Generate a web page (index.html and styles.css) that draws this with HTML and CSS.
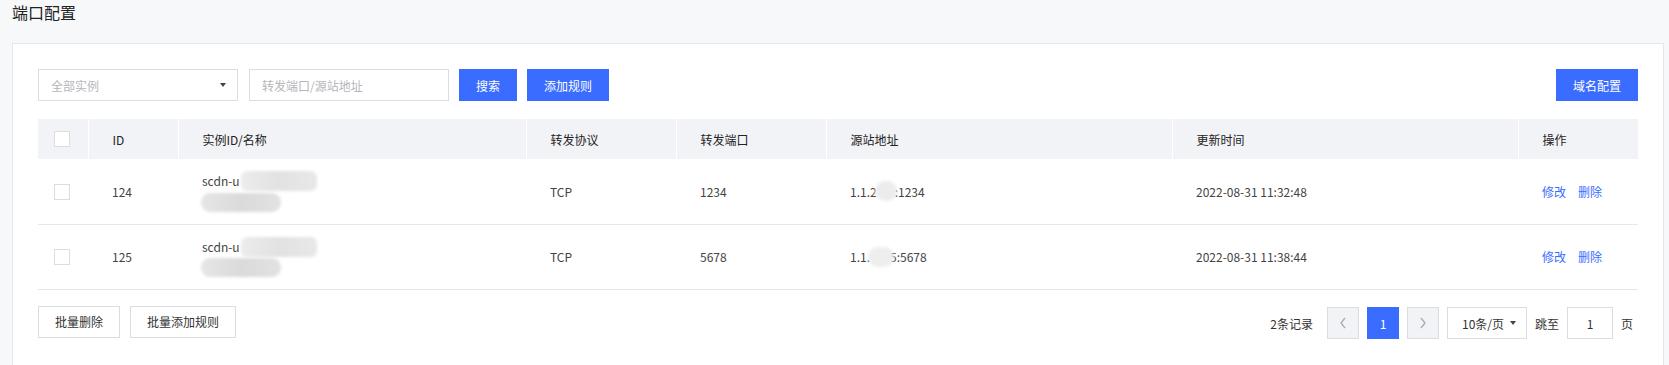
FILE: index.html
```html
<!DOCTYPE html>
<html lang="zh-CN">
<head>
<meta charset="utf-8">
<title>端口配置</title>
<link rel="stylesheet" href="styles.css">
</head>
<body>
<div class="page">
  <div class="title">端口配置</div>
  <div class="card">
    <div class="toolbar">
      <div class="tools-left">
        <div class="select"><span class="ph">全部实例</span><span class="caret"></span></div>
        <div class="input"><span class="ph">转发端口/源站地址</span></div>
        <button class="btn primary w58">搜索</button>
        <button class="btn primary w82">添加规则</button>
      </div>
      <button class="btn primary w82">域名配置</button>
    </div>
    <table class="grid">
      <colgroup>
        <col class="c-check"><col class="c-id"><col class="c-inst"><col class="c-proto"><col class="c-port"><col class="c-src"><col class="c-time"><col class="c-op">
      </colgroup>
      <thead>
        <tr>
          <th class="chk"><span class="checkbox"></span></th>
          <th>ID</th>
          <th>实例ID/名称</th>
          <th>转发协议</th>
          <th>转发端口</th>
          <th>源站地址</th>
          <th>更新时间</th>
          <th>操作</th>
        </tr>
      </thead>
      <tbody>
        <tr>
          <td class="chk"><span class="checkbox"></span></td>
          <td>124</td>
          <td><div class="inst"><div class="l1">scdn-u<span class="blur b1"></span></div><div class="l2"><span class="blur b2"></span></div></div></td>
          <td>TCP</td>
          <td>1234</td>
          <td><span class="ipline">1.1.2<span class="blur ip"></span>:1234</span></td>
          <td>2022-08-31 11:32:48</td>
          <td><a class="link">修改</a><a class="link">删除</a></td>
        </tr>
        <tr>
          <td class="chk"><span class="checkbox"></span></td>
          <td>125</td>
          <td><div class="inst"><div class="l1">scdn-u<span class="blur b1"></span></div><div class="l2"><span class="blur b2"></span></div></div></td>
          <td>TCP</td>
          <td>5678</td>
          <td><span class="ipline">1.1.<span class="blur ip ip2"></span>5:5678</span></td>
          <td>2022-08-31 11:38:44</td>
          <td><a class="link">修改</a><a class="link">删除</a></td>
        </tr>
      </tbody>
    </table>
    <div class="footer">
      <div class="tools-left">
        <button class="btn plain w82">批量删除</button>
        <button class="btn plain w106">批量添加规则</button>
      </div>
      <div class="pager">
        <span class="total">2条记录</span>
        <span class="pbtn disabled"><svg width="8" height="12" viewBox="0 0 8 12"><path d="M6 1 L2 6 L6 11" fill="none" stroke="#a8acb5" stroke-width="1.3"/></svg></span>
        <span class="pbtn active">1</span>
        <span class="pbtn disabled"><svg width="8" height="12" viewBox="0 0 8 12"><path d="M2 1 L6 6 L2 11" fill="none" stroke="#a8acb5" stroke-width="1.3"/></svg></span>
        <span class="psize">10条/页<span class="caret"></span></span>
        <span class="ptext">跳至</span>
        <span class="pjump">1</span>
        <span class="ptext">页</span>
      </div>
    </div>
  </div>
</div>
</body>
</html>
```

FILE: styles.css
```css
* { box-sizing: border-box; }
html, body { margin: 0; padding: 0; }
body {
  background: #f7f8fa;
  font-family: "Noto Sans CJK SC", "Noto Sans", sans-serif;
  font-size: 12px;
  color: #333;
  height: 365px;
  overflow: hidden;
}
.page { padding: 0 5px 0 12px; }
.title {
  font-size: 16px;
  line-height: 24px;
  height: 24px;
  margin-bottom: 19px;
  color: #222;
}
.card {
  background: #fff;
  border: 1px solid #e6e7ea;
  padding: 25px 25px 40px;
}
.toolbar {
  display: flex;
  justify-content: space-between;
  align-items: center;
  height: 32px;
  margin-bottom: 18px;
}
.tools-left { display: flex; align-items: center; gap: 10px; }
.select, .input {
  width: 200px;
  height: 32px;
  border: 1px solid #dcdde0;
  display: flex;
  align-items: center;
  padding: 0 12px;
  justify-content: space-between;
}
.select { margin-right: 1px; padding-right: 11px; }
.ph { color: #b4b6bb; }
.caret {
  width: 0; height: 0;
  border-left: 3.5px solid transparent;
  border-right: 3.5px solid transparent;
  border-top: 4px solid #444;
  display: inline-block;
}
.btn {
  height: 32px;
  border: 1px solid transparent;
  font-family: inherit;
  font-size: 12px;
  padding: 0;
  cursor: pointer;
}
.btn.primary { background: #3a6cff; color: #fff; }
.btn.plain { background: #fff; border-color: #dcdde0; color: #333; }
.w58 { width: 58px; }
.w82 { width: 82px; }
.w106 { width: 106px; }

.grid {
  width: 100%;
  border-collapse: collapse;
  table-layout: fixed;
}
.c-check { width: 50px; }
.c-id { width: 90px; }
.c-inst { width: 348px; }
.c-proto { width: 150px; }
.c-port { width: 150px; }
.c-src { width: 346px; }
.c-time { width: 346px; }
.c-op { width: 120px; }
.grid th {
  background: #f2f3f7;
  height: 40px;
  text-align: left;
  font-weight: normal;
  color: #222;
  padding: 0 0 0 24px;
  border-left: 1px solid #fff;
}
.grid th:first-child { border-left: none; }
.grid td {
  height: 65px;
  padding: 0 0 0 24px;
  border-bottom: 1px solid #e6e7ea;
  color: #444;
  white-space: nowrap;
}
.grid .chk { padding-left: 16px; }
.checkbox {
  display: block;
  width: 16px; height: 16px;
  border: 1px solid #dcdde0;
  background: #fff;
}
.grid td .checkbox { margin-top: 1px; }
.inst { line-height: 20px; }
.l1, .l2 { height: 20px; display: flex; align-items: center; }
.blur {
  display: inline-block;
  background: #e4e4e4;
  filter: blur(1.5px);
}
.b1 { width: 76px; height: 20px; border-radius: 6px; margin-left: 1px; background: linear-gradient(90deg, #ececec, #e2e2e2 50%, #e8e8e8); }
.b2 { width: 80px; height: 19px; border-radius: 9px; background: linear-gradient(90deg, #e6e6e6, #dadada 50%, #e2e2e2); margin-left: -1px; margin-top: 2px; }
.ipline { display: inline-flex; align-items: center; height: 20px; }
.ip { width: 22px; height: 20px; border-radius: 10px; background: #ececec; margin: 0 -2px 0 -2px; }
.ip2 { width: 26px; margin: 0 -4px 0 -2px; background: #eeeeee; }
.link { color: #3a6cff; margin-right: 12px; cursor: pointer; }

.footer {
  display: flex;
  justify-content: space-between;
  align-items: center;
  margin-top: 16px;
  height: 32px;
}
.pager { display: flex; align-items: center; gap: 8px; margin-top: 3px; margin-right: 5px; }
.total { margin-right: 6px; color: #333; }
.pbtn {
  width: 32px; height: 32px;
  display: flex; align-items: center; justify-content: center;
  border: 1px solid #dcdde0;
}
.pbtn.disabled { background: #f2f3f7; }
.pbtn.active { background: #3a6cff; border-color: #3a6cff; color: #fff; }
.psize {
  width: 80px; height: 32px;
  border: 1px solid #dcdde0;
  display: flex; align-items: center; justify-content: space-between;
  padding: 0 10px 0 14px;
  color: #333;
}
.ptext { color: #333; }
.pjump {
  width: 46px; height: 32px;
  border: 1px solid #dcdde0;
  display: flex; align-items: center; justify-content: center;
}
```
